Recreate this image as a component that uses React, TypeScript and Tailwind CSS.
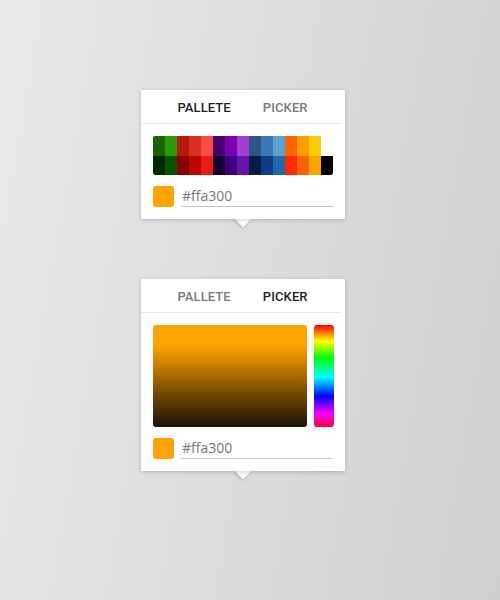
import { useState } from "react";

const topRow = [
  "#176300",
  "#289c00",
  "#b8180d",
  "#d73120",
  "#f54c43",
  "#44036f",
  "#7b00b4",
  "#a43fd4",
  "#2d5486",
  "#3e78b7",
  "#5aa3d5",
  "#ff6400",
  "#ff9c00",
  "#ffcc00",
];

const bottomRow = [
  "#002700",
  "#055500",
  "#8a0000",
  "#b90800",
  "#ec1a15",
  "#140030",
  "#3b0082",
  "#6a12b0",
  "#081c45",
  "#0f3c83",
  "#2169ad",
  "#ff2a00",
  "#ff6000",
  "#ffa300",
  "#000000",
];

interface TabsProps {
  active: "pallete" | "picker";
}

const Tabs = ({ active }: TabsProps) => (
  <div className="mr-1 flex h-[34px] items-center justify-center border-b border-[#e6e6e6] pl-[3px] pt-[2px]">
    <span
      className={`px-4 text-[13px] font-medium tracking-[0.1px] ${
        active === "pallete" ? "text-[#1f1f1f]" : "text-[#7a7a7a]"
      }`}
    >
      PALLETE
    </span>
    <span
      className={`px-4 text-[13px] font-medium tracking-[0.1px] ${
        active === "picker" ? "text-[#1f1f1f]" : "text-[#7a7a7a]"
      }`}
    >
      PICKER
    </span>
  </div>
);

const HexInput = ({ value }: { value: string }) => (
  <div className="flex items-center gap-[7px]">
    <div className="h-[21px] w-[21px] shrink-0 rounded-[3px] bg-[#ffa300]" />
    <div className="flex h-[21px] flex-1 items-center border-b border-[#c9c9c9] pb-[2px] pl-[1px] font-['Open_Sans',sans-serif] text-[14px] text-[#777777]">
      {value}
    </div>
  </div>
);

const Popover = ({ children }: { children: React.ReactNode }) => (
  <div className="relative w-[204px]">
    <div className="absolute bottom-[-6px] left-[96px] h-[12px] w-[12px] rotate-45 bg-white shadow-[0_1px_3px_rgba(0,0,0,0.25)]" />
    <div className="relative bg-white shadow-[0_1px_4px_rgba(0,0,0,0.2)]">
      {children}
    </div>
  </div>
);

const PalettePanel = () => (
  <div className="pb-3 pl-3 pr-3 pt-3">
    <div className="flex flex-col overflow-hidden rounded-[2px]">
      <div className="flex h-[19.5px]">
        {topRow.map((c) => (
          <div key={c} className="h-full w-[12px]" style={{ backgroundColor: c }} />
        ))}
      </div>
      <div className="flex h-[19.5px]">
        {bottomRow.map((c, i) => (
          <div
            key={c}
            className={`h-full w-[12px] ${i === 0 ? "rounded-bl-[2px]" : ""} ${
              i === bottomRow.length - 1 ? "rounded-br-[2px]" : ""
            }`}
            style={{ backgroundColor: c }}
          />
        ))}
      </div>
    </div>
    <div className="mt-[11px]">
      <HexInput value="#ffa300" />
    </div>
  </div>
);

const PickerPanel = () => (
  <div className="pb-3 pl-3 pr-[11px] pt-3">
    <div className="flex gap-[7px]">
      <div className="h-[102px] flex-1 rounded-[3px] bg-[linear-gradient(to_bottom,#ffa300_0%,#ffa300_20%,#b87400_45%,#6b4403_70%,#1c130a_100%)]" />
      <div className="h-[102px] w-[20px] rounded-[3px] bg-[linear-gradient(to_bottom,#ff0000_0%,#ffff00_16%,#00ff00_32%,#00ffff_51%,#0000ff_70%,#ff00ff_87%,#ff0033_100%)]" />
    </div>
    <div className="mt-[11px] pr-[1px]">
      <HexInput value="#ffa300" />
    </div>
  </div>
);

export default function App() {
  const [hex] = useState("#ffa300");

  return (
    <div className="flex h-[600px] w-[500px] flex-col items-center bg-[linear-gradient(100deg,#e9e9e9_0%,#dcdcdc_50%,#cfcfcf_100%)] pr-[14px] pt-[90px] font-['Roboto',sans-serif]">
      <Popover>
        <Tabs active="pallete" />
        <PalettePanel />
      </Popover>
      <div className="h-[60px]" />
      <Popover>
        <Tabs active="picker" />
        <PickerPanel />
      </Popover>
      <span className="hidden">{hex}</span>
    </div>
  );
}
